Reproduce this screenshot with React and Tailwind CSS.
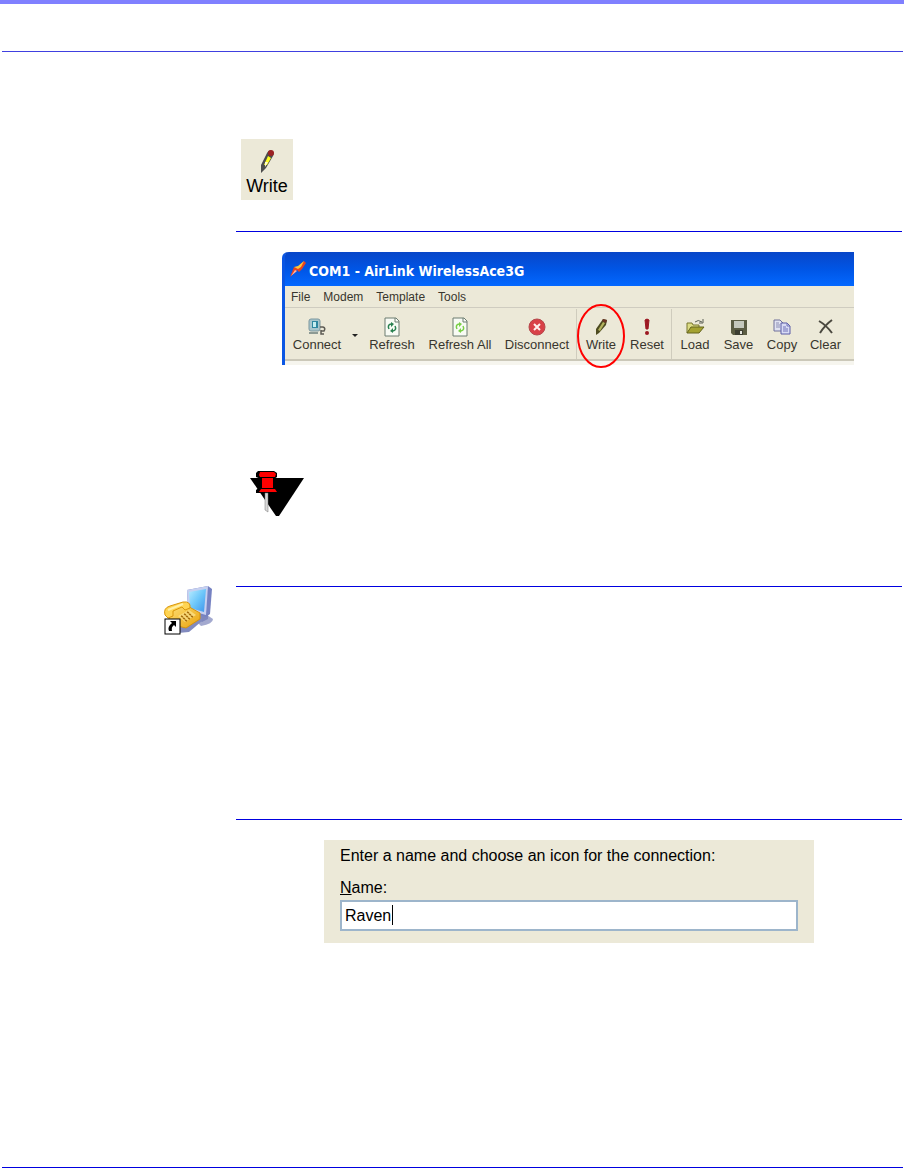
import { useState } from 'react';

function PencilIcon({ className }) {
  return (
    <svg viewBox="0 0 16 26" className={className}>
      <path d="M2 25 L2 17 L8 5 Q10 1 13 3 Q16 5 14 8 L7 20 Z" fill="#4c4c4c" />
      <path d="M5 17 L9 8 L12 10 L8 17 Z" fill="#ffff20" />
      <path d="M6 19 L6 14 L9 14 Z" fill="#fffbd0" />
      <circle cx="12" cy="5" r="3" fill="#9c2224" />
    </svg>
  );
}

function SmallPencilIcon() {
  return (
    <svg viewBox="0 0 18 18" className="w-[18px] h-[18px]">
      <path d="M4 17 L4 11 L11 1 L15 2 L14 7 L7 15 Z" fill="#4d4b20" />
      <path d="M6 12 L11 4 L13 5 L8 13 Z" fill="#b4b35e" />
      <path d="M11 1 L15 2 L14 5 L10 3 Z" fill="#6b3324" />
    </svg>
  );
}

function ConnectIcon() {
  return (
    <svg viewBox="0 0 20 18" className="w-5 h-[18px]">
      <rect x="2" y="1" width="11" height="12" rx="2" fill="#a9c6cc" stroke="#7d979f" />
      <rect x="5" y="3" width="6" height="7" fill="#2f87a0" />
      <rect x="6" y="4" width="3" height="5" fill="#c7eef0" />
      <path d="M2 15 H11" fill="none" stroke="#8d9a94" strokeWidth="2" />
      <path d="M13 9 H16 Q19 10 17 13 H14 M14 12 V16 H17" fill="none" stroke="#5c5b54" strokeWidth="1.5" />
    </svg>
  );
}

function RefreshIcon({ color }) {
  return (
    <svg viewBox="0 0 18 20" className="w-[18px] h-5">
      <path d="M2 1 H13 L16 4 V19 H2 Z" fill="#f8fbf4" stroke="#6d7d70" />
      <path d="M12 1 V5 H16" fill="none" stroke="#6d7d70" />
      <path d="M6 12 Q4 8 8 7 M12 9 Q14 13 10 14" fill="none" stroke={color} strokeWidth="1.5" />
      <path d="M8 5 L11 7 L8 10 Z M10 11 L7 14 L10 16 Z" fill={color} />
    </svg>
  );
}

function DisconnectIcon() {
  return (
    <svg viewBox="0 0 18 18" className="w-[18px] h-[18px]">
      <circle cx="9" cy="9" r="8" fill="#d94148" stroke="#b5484b" />
      <path d="M6 6 L12 12 M12 6 L6 12" stroke="#fff0ee" strokeWidth="2" />
    </svg>
  );
}

function ResetIcon() {
  return (
    <svg viewBox="0 0 18 18" className="w-[18px] h-[18px]">
      <path d="M7 2 Q9 0 11 2 L10 11 H8 Z" fill="#9c1822" stroke="#9c1822" />
      <circle cx="9" cy="15" r="2" fill="#9c1822" />
    </svg>
  );
}

function LoadIcon() {
  return (
    <svg viewBox="0 0 20 18" className="w-5 h-[18px]">
      <path d="M2 15 V5 H7 L8 7 H14 V10" fill="#dcdc84" stroke="#77752c" />
      <path d="M2 15 L6 9 H19 L14 15 Z" fill="#a4a231" stroke="#65641e" />
      <path d="M10 4 Q13 1 17 4 M18 1 V5 H14" fill="none" stroke="#5a5f55" />
    </svg>
  );
}

function SaveIcon() {
  return (
    <svg viewBox="0 0 18 18" className="w-[18px] h-[18px]">
      <path d="M1 2 H17 V17 H3 L1 15 Z" fill="#5b5c42" />
      <rect x="4" y="3" width="10" height="7" fill="#c5c8bc" />
      <rect x="5" y="12" width="8" height="5" fill="#3d3e32" />
      <rect x="10" y="13" width="2" height="3" fill="#e4e5de" />
    </svg>
  );
}

function CopyIcon() {
  return (
    <svg viewBox="0 0 20 18" className="w-5 h-[18px]">
      <path d="M2 2 H8 L11 5 V13 H2 Z" fill="#e0e2f1" stroke="#70719a" />
      <path d="M4 5 H7 M4 7 H8 M4 9 H8" stroke="#8c8eb4" />
      <path d="M9 5 H15 L18 8 V16 H9 Z" fill="#d8dbf5" stroke="#5a5ca6" />
      <path d="M15 5 V8 H18 M11 9 H14 M11 11 H16 M11 13 H16" fill="none" stroke="#7072b8" />
    </svg>
  );
}

function ClearIcon() {
  return (
    <svg viewBox="0 0 18 18" className="w-[18px] h-[18px]">
      <path d="M2 3 Q9 7 15 15 M15 2 Q8 7 3 15" fill="none" stroke="#4a483f" strokeWidth="2" />
    </svg>
  );
}

function BoltIcon() {
  return (
    <svg viewBox="0 0 18 18" className="w-[18px] h-[18px]">
      <path d="M1 17 L5 7 L8 8 L15 1 L17 3 L13 9 L10 12 L8 10 Z" fill="#e8431f" />
      <path d="M5 7 L9 6 L15 1 L12 7 L9 9 Z" fill="#ffc53a" />
      <path d="M2 16 L6 10 L8 11 Z" fill="#ffb3a0" />
    </svg>
  );
}

function PinIcon() {
  return (
    <svg viewBox="0 0 54 48" className="w-[54px] h-12">
      <path d="M0 8 H54 L29 46 H26 Z" fill="#000" />
      <path d="M6 3 L8 1 H24 L27 3 V7 L24 9 V17 L28 20 V23 H6 V20 L11 16 V9 L6 7 Z" fill="#000" />
      <path d="M10 2 H24 L26 4 L25 7 H10 L9 5 Z" fill="#f00" />
      <path d="M12 8 H23 V18 H12 Z" fill="#f00" />
      <path d="M11 19 H25 L27 22 H9 Z" fill="#f00" />
      <path d="M15 23 H18 V42 L15 40 Z" fill="#d8d8d8" stroke="#777" strokeWidth="0.5" />
    </svg>
  );
}

function DialUpIcon() {
  return (
    <svg viewBox="0 0 50 50" className="w-[50px] h-[50px]">
      <defs>
        <linearGradient id="screen" x1="0" y1="0" x2="1" y2="1">
          <stop offset="0" stopColor="#b8ecff" />
          <stop offset="0.5" stopColor="#6cc6fa" />
          <stop offset="1" stopColor="#3e94ec" />
        </linearGradient>
        <linearGradient id="phone" x1="0" y1="0" x2="1" y2="1">
          <stop offset="0" stopColor="#ffe27a" />
          <stop offset="1" stopColor="#e9a20c" />
        </linearGradient>
      </defs>
      <path d="M28 31 L40 27 L49 33 Q49 38 37 40 Z" fill="#a3a9cf" />
      <path d="M34 25 H44 V33 L38 36 L33 32 Z" fill="#7e87bd" />
      <path d="M23 4 L44 0 L48 3 L46 28 L42 31 L24 24 Z" fill="#7682c2" />
      <path d="M23 4 L44 0 L42 29 L24 24 Z" fill="#c6d0f0" />
      <path d="M25 6 L42 3 L40 26 L26 22 Z" fill="url(#screen)" />
      <path d="M14 40 L37 28 L38 35 L25 46 L14 47 Z" fill="#828bbf" />
      <path d="M5 24 L20 18 L36 27 L36 33 L22 42 L5 38 Z" fill="url(#phone)" stroke="#d5930e" />
      <path d="M1 29 Q-1 22 6 20 L19 16 Q27 15 26 22 L21 24 L18 21 L9 25 L9 30 L4 32 Z" fill="#ffd452" stroke="#d9960b" />
      <path d="M4 24 L19 18" stroke="#fff0a6" strokeWidth="2" />
      <path d="M14 30 L25 24 L32 29 L21 36 Z" fill="#f9d979" />
      <path d="M17 30 l2 1 M20 28 l2 1 M23 26 l2 1 M19 32 l2 1 M22 30 l2 1 M25 28 l2 1 M21 34 l2 1 M24 32 l2 1 M27 30 l2 1" stroke="#a86f0d" strokeWidth="1.5" />
      <rect x="1" y="33" width="15" height="15" fill="#fff" stroke="#000" />
      <path d="M6 35 H12 V41 L10 39 Q7 41 8 45 H5 Q3 41 8 37 Z" fill="#000" />
    </svg>
  );
}

function ToolButton({ label, width, children }) {
  return (
    <button className={`${width} relative shrink-0 flex flex-col items-center whitespace-nowrap text-[13px] leading-4 text-[#38362e]`}>
      <span className="h-5 flex items-center">{children}</span>
      <span>{label}</span>
    </button>
  );
}

function Separator() {
  return <div className="w-px h-[50px] -mt-2 mx-px shrink-0 bg-[#cfccbd]" />;
}

function ModemWindow() {
  return (
    <div className="w-[572px] ml-[46px] rounded-tl-md border-l-[3px] border-[#0a56e4] bg-[#ece9d8]">
      <div className="h-[34px] pl-1 flex items-center gap-[2px] rounded-tl-sm bg-linear-to-b from-[#0846c8] via-[#0055e5] to-[#0468ff]">
        <BoltIcon />
        <h1 className="pt-1 text-sm leading-4 font-bold text-white font-['DejaVu_Sans_Condensed','DejaVu_Sans',sans-serif]">
          COM1 - AirLink WirelessAce3G
        </h1>
      </div>
      <nav className="h-[22px] pl-[6px] flex items-center gap-[13px] border-b border-[#cfccc0] text-xs text-[#38362e]">
        <button>File</button>
        <button>Modem</button>
        <button>Template</button>
        <button>Tools</button>
      </nav>
      <div className="h-[53px] pt-[9px] pl-[2px] flex items-start border-b-2 border-[#cbc8b9]">
        <ToolButton label="Connect" width="w-[60px]"><ConnectIcon /></ToolButton>
        <button aria-label="Connect options" className="w-4 h-9 flex items-center justify-center">
          <svg viewBox="0 0 6 3" className="w-[6px] h-[3px]"><path d="M0 0 H6 L3 3 Z" fill="#222" /></svg>
        </button>
        <ToolButton label="Refresh" width="w-[58px]"><RefreshIcon color="#298150" /></ToolButton>
        <ToolButton label="Refresh All" width="w-[78px]"><RefreshIcon color="#78cf45" /></ToolButton>
        <ToolButton label="Disconnect" width="w-[76px]"><DisconnectIcon /></ToolButton>
        <Separator />
        <ToolButton label="Write" width="w-[46px]">
          <SmallPencilIcon />
          <svg viewBox="0 0 48 64" className="absolute -left-px -top-[13px] w-12 h-16">
            <ellipse cx="24" cy="32" rx="23" ry="31" fill="none" stroke="#f00" strokeWidth="2" />
          </svg>
        </ToolButton>
        <ToolButton label="Reset" width="w-[46px]"><ResetIcon /></ToolButton>
        <Separator />
        <ToolButton label="Load" width="w-[44px]"><LoadIcon /></ToolButton>
        <ToolButton label="Save" width="w-[43px]"><SaveIcon /></ToolButton>
        <ToolButton label="Copy" width="w-[44px]"><CopyIcon /></ToolButton>
        <ToolButton label="Clear" width="w-[43px]"><ClearIcon /></ToolButton>
      </div>
      <div className="h-1 bg-[#f6f5ee]" />
    </div>
  );
}

function ConnectionForm() {
  const [name, setName] = useState('Raven');

  return (
    <form className="w-[490px] h-[103px] ml-[88px] px-4 pt-1 bg-[#ece9d8] text-base leading-6 text-black">
      <p className="whitespace-nowrap">Enter a name and choose an icon for the connection:</p>
      <label htmlFor="name" className="block mt-2 leading-6"><u>N</u>ame:</label>
      <div className="relative">
        <input
          id="name"
          type="text"
          value={name}
          onChange={(e) => setName(e.target.value)}
          className="block w-full h-[31px] px-[3px] border-2 border-[#9db5cb] bg-white"
        />
        <span className="absolute left-[52px] top-[5px] w-px h-5 bg-black" />
      </div>
    </form>
  );
}

export default function App() {
  return (
    <div className="bg-white font-['Liberation_Sans',Arial,sans-serif]">
      <div className="h-1 bg-[#8080ff]" />
      <hr className="mt-[47px] ml-[2px] mr-px border-[#4040e0]" />

      <main className="pr-[2px]">
        <div className="ml-[236px] pt-[87px]">
          <button className="ml-[5px] w-[52px] h-[61px] pt-[9px] flex flex-col items-center bg-[#ece9d8] text-lg leading-6 text-black">
            <PencilIcon className="w-4 h-[26px]" />
            <span>Write</span>
          </button>
          <hr className="mt-[31px] mb-5 border-[#0000e0]" />
          <ModemWindow />
          <div className="mt-[105px] ml-[14px]">
            <PinIcon />
          </div>
        </div>

        <section className="mt-[68px] flex items-start">
          <div className="w-[236px] shrink-0 pl-[164px]">
            <DialUpIcon />
          </div>
          <div className="flex-1">
            <hr className="border-[#0000e0]" />
            <hr className="mt-[232px] mb-5 border-[#0000e0]" />
            <ConnectionForm />
          </div>
        </section>
      </main>

      <hr className="mt-[224px] ml-[2px] mr-px border-[#0000e0]" />
    </div>
  );
}
